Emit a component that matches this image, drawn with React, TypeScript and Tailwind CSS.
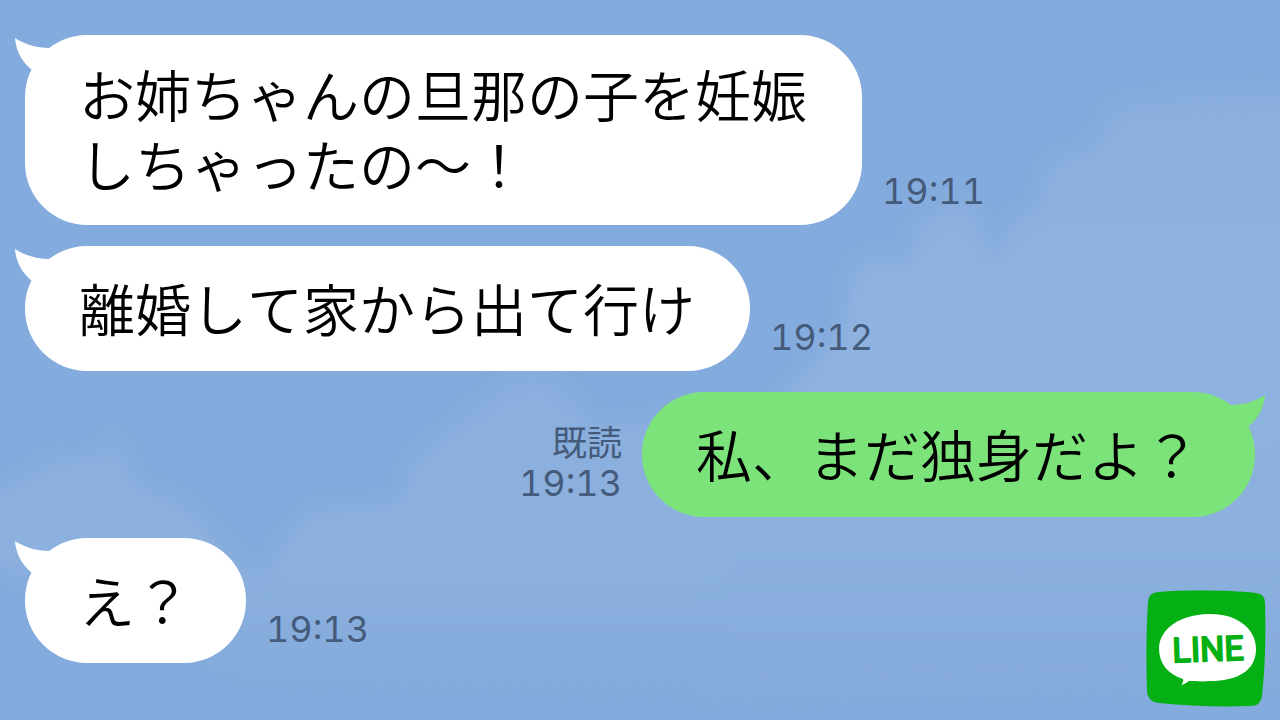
import clsx from "clsx";

type Message = {
  id: number;
  text: string;
  time: string;
  mine?: boolean;
  read?: boolean;
};

const messages: Message[] = [
  { id: 1, text: "お姉ちゃんの旦那の子を妊娠\nしちゃったの〜！", time: "19:11" },
  { id: 2, text: "離婚して家から出て行け", time: "19:12" },
  { id: 3, text: "私、まだ独身だよ？", time: "19:13", mine: true, read: true },
  { id: 4, text: "え？", time: "19:13" },
];

function SkyBackground() {
  return (
    <svg
      className="absolute inset-0 h-full w-full"
      viewBox="0 0 1280 720"
      preserveAspectRatio="xMidYMid slice"
      aria-hidden="true"
    >
      <defs>
        <filter id="soft" x="-10%" y="-10%" width="120%" height="120%">
          <feGaussianBlur stdDeviation="9" />
        </filter>
        <linearGradient id="cloudLeft" x1="0" y1="370" x2="0" y2="680" gradientUnits="userSpaceOnUse">
          <stop offset="0" stopColor="#8aafde" />
          <stop offset="0.55" stopColor="#8db1de" />
          <stop offset="1" stopColor="#84abdd" />
        </linearGradient>
        <linearGradient id="cloudRight" x1="0" y1="90" x2="0" y2="680" gradientUnits="userSpaceOnUse">
          <stop offset="0" stopColor="#8aafdd" />
          <stop offset="0.4" stopColor="#8fb3e0" />
          <stop offset="0.75" stopColor="#8bb0de" />
          <stop offset="1" stopColor="#86acdd" />
        </linearGradient>
      </defs>
      <g filter="url(#soft)">
        <path
          d="M-20 500 L35 475 50 460 95 460 115 438 135 485 188 510 225 550 258 580 285 545 310 512 380 508 402 500 412 465 450 430 500 392 530 375 560 388 600 430 700 410 800 690 500 680 240 670 120 610 -20 560Z"
          fill="url(#cloudLeft)"
        />
        <path
          d="M845 330 L852 275 868 258 908 265 918 225 950 205 975 212 993 265 1010 225 1040 205 1050 165 1095 148 1115 110 1180 98 1300 95 1300 680 700 690 760 420Z"
          fill="url(#cloudRight)"
        />
      </g>
    </svg>
  );
}

function Tail({ mine }: { mine?: boolean }) {
  return (
    <svg
      className={clsx(
        "absolute top-[3px] h-10 w-12",
        mine ? "-right-[10px] -scale-x-100 text-[#7ce37a]" : "-left-[10px] text-white",
      )}
      viewBox="0 0 48 40"
      fill="currentColor"
      aria-hidden="true"
    >
      <path d="M0 0 C9 6 21 10 35 10 L48 22 L30 40 L17 32 C7 24 1 13 0 0Z" />
    </svg>
  );
}

function MessageRow({ message }: { message: Message }) {
  const { text, time, mine, read } = message;

  return (
    <li className={clsx("flex items-end gap-5", mine && "flex-row-reverse")}>
      <div
        className={clsx(
          "relative flex min-h-[125px] items-center rounded-[62px] pt-[23px] pr-[55px] pb-[27px] pl-[54px]",
          mine ? "bg-[#7ce37a]" : "bg-white",
        )}
      >
        <Tail mine={mine} />
        <p className="relative text-[56px] leading-[70px] font-[350] whitespace-pre text-black [font-kerning:none]">
          {text}
        </p>
      </div>
      <div className="flex flex-col items-end pb-[13px] text-[#455b7b]">
        {read && <span className="text-[35px] leading-[42px]">既読</span>}
        <time className="font-['Inter',sans-serif] text-[36px] leading-[42px] tabular-nums">
          {time}
        </time>
      </div>
    </li>
  );
}

function LineLogo() {
  return (
    <svg
      className="absolute right-[14px] bottom-3 h-[118px] w-[120px]"
      viewBox="0 0 120 118"
      role="img"
      aria-label="LINE"
    >
      <path
        d="M12 2 C42 0 82 0 110 3 Q119 4 119 13 C120 45 119 78 116 106 Q115 116 104 116 C75 117 42 116 13 113 Q2 112 1 102 C0 72 0 42 2 12 Q2 3 12 2Z"
        fill="#04b014"
      />
      <path
        d="M62 24 C90 23 110 38 110 59 C110 81 91 91 64 91 C56 92 49 91 43 91 Q39 94 35 95 Q38 92 37 89 C22 84 13 74 13 58 C14 38 34 25 62 24Z"
        fill="#ffffff"
      />
      <text
        x="62"
        y="71"
        textAnchor="middle"
        transform="rotate(-2 62 59)"
        className="fill-[#04b014] stroke-[#04b014] stroke-2 font-['Roboto',sans-serif] text-[34px] font-normal"
        strokeLinejoin="round"
      >
        LINE
      </text>
    </svg>
  );
}

export default function App() {
  return (
    <main className="relative min-h-screen overflow-hidden bg-[#84abdd] font-['Noto_Sans_CJK_JP',sans-serif]">
      <SkyBackground />
      <ul className="relative flex flex-col gap-[21px] px-[25px] pt-[35px] pb-14">
        {messages.map((message) => (
          <MessageRow key={message.id} message={message} />
        ))}
      </ul>
      <LineLogo />
    </main>
  );
}
